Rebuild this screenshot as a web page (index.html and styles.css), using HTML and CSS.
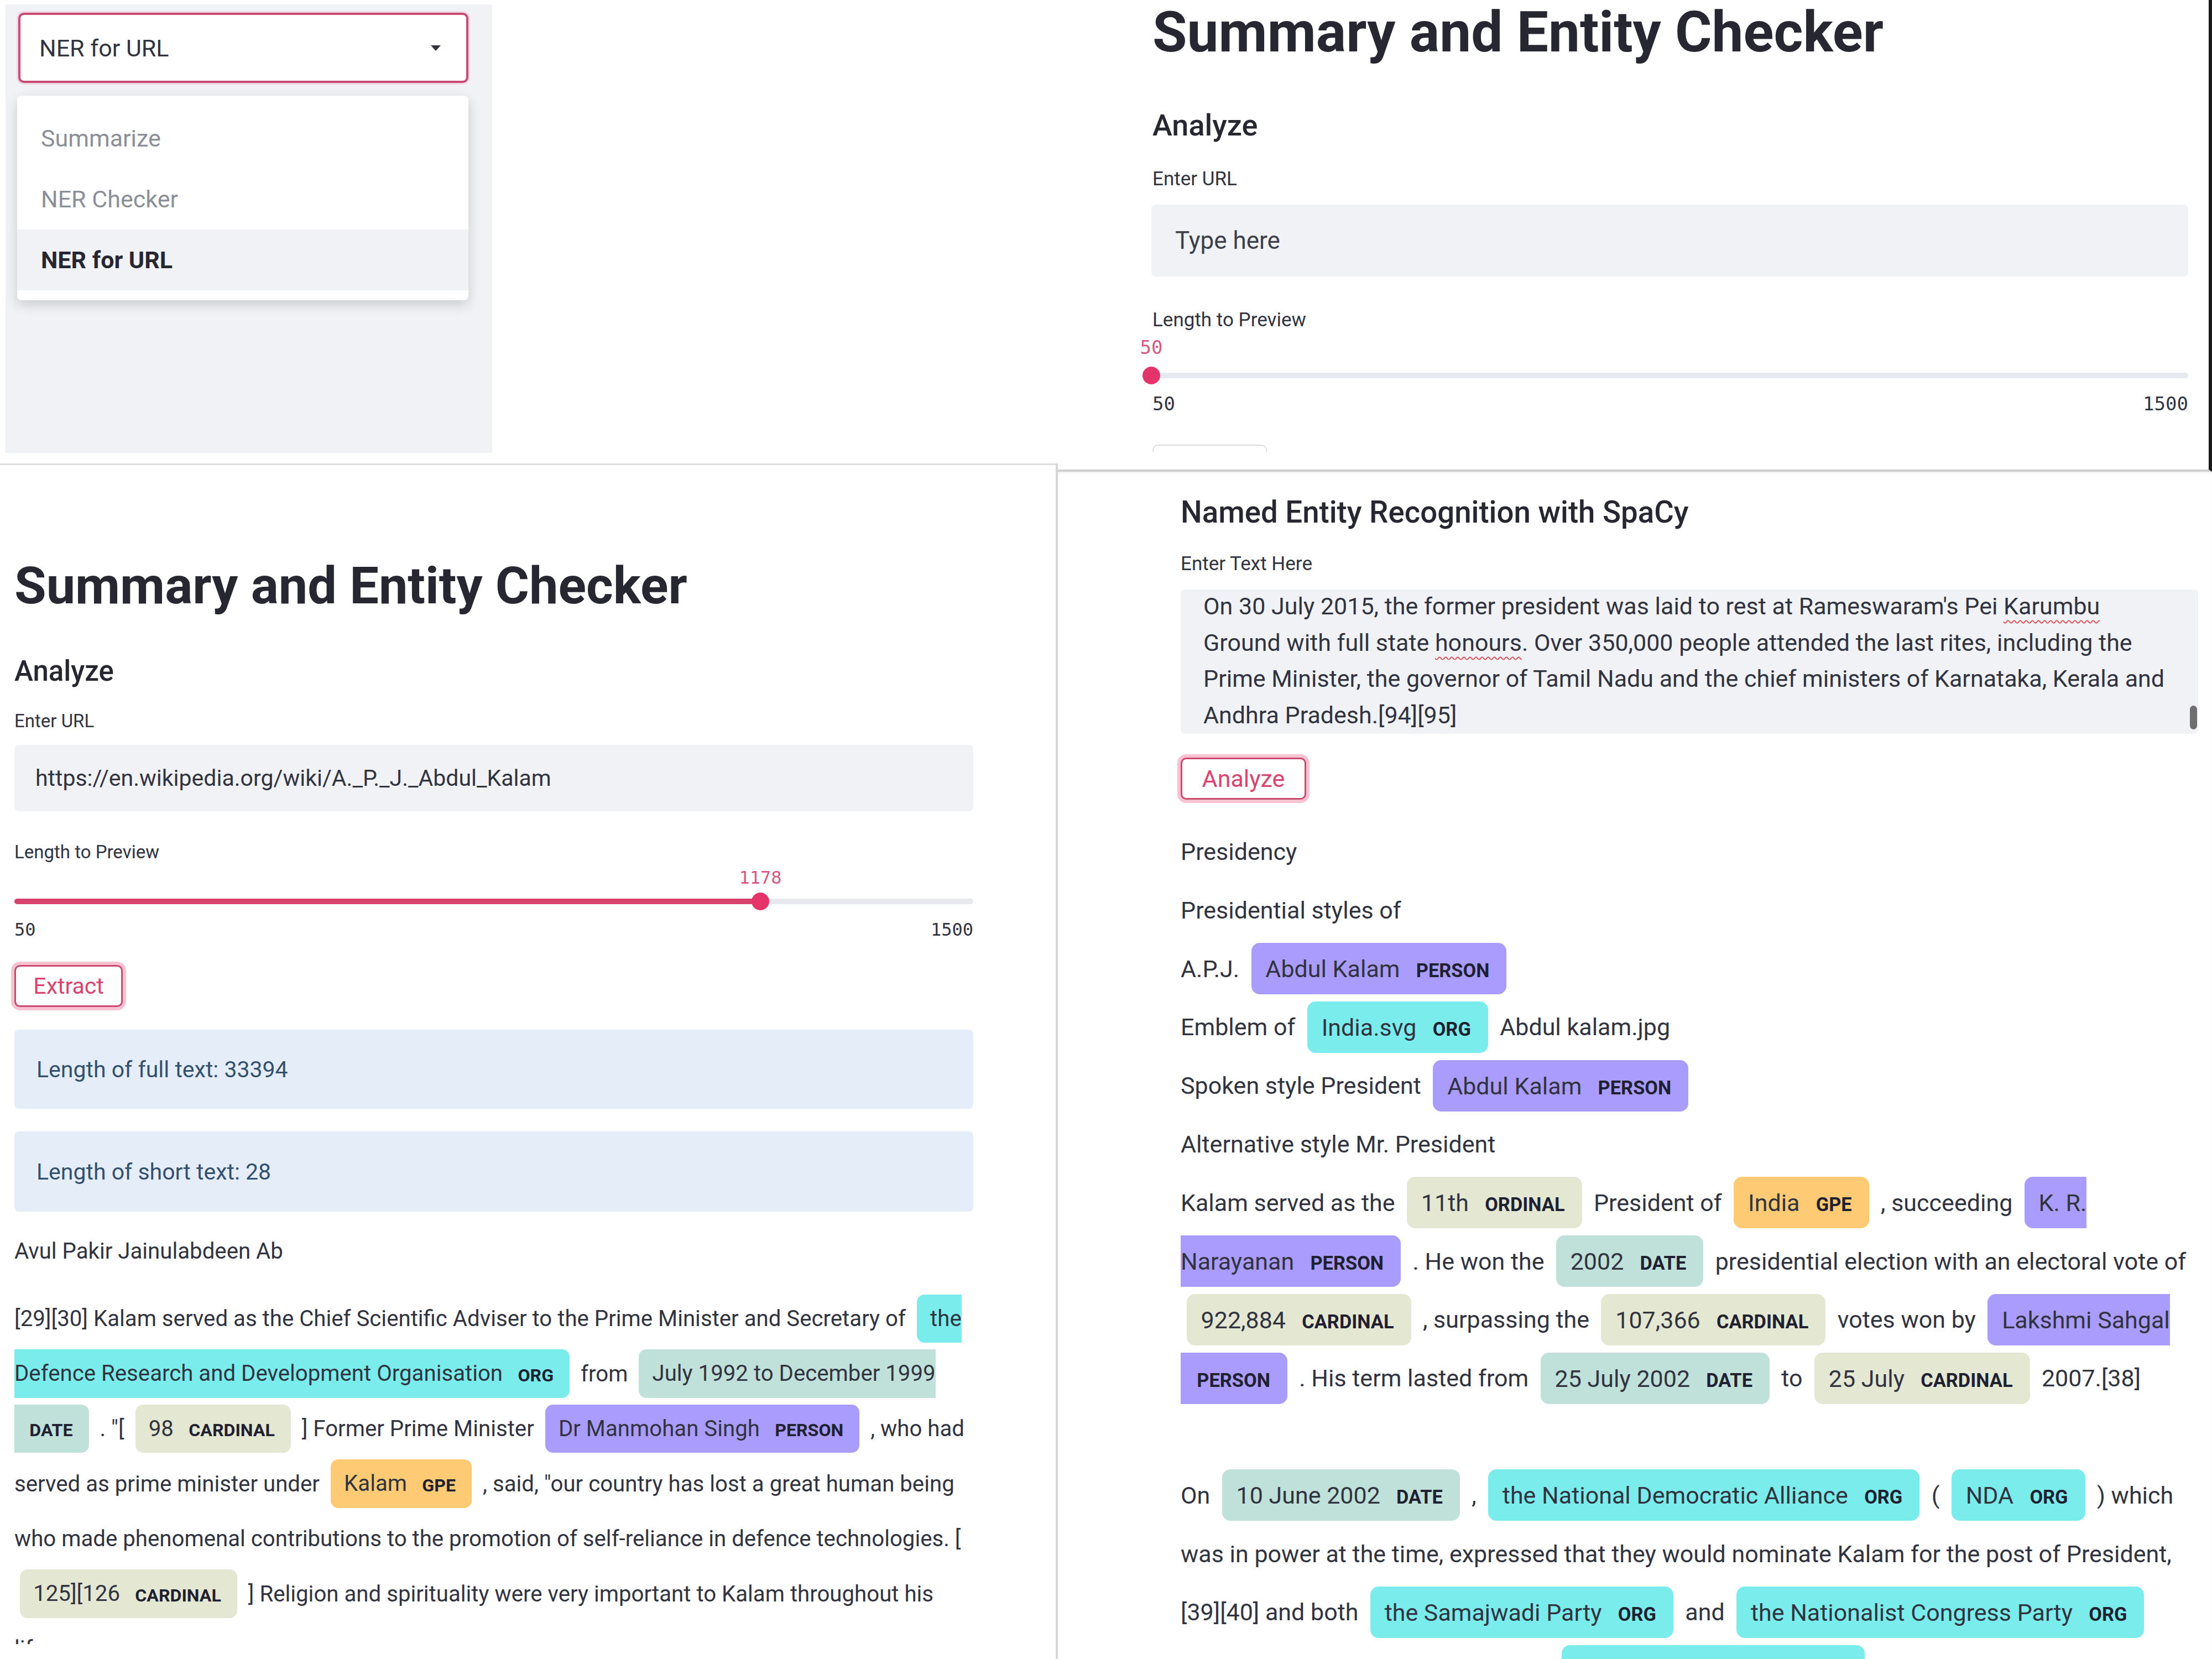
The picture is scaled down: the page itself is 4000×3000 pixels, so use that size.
FILE: index.html
```html
<!DOCTYPE html>
<html>
<head>
<meta charset="utf-8">
<title>Summary and Entity Checker</title>
<link rel="stylesheet" href="styles.css">
</head>
<body>
<div class="page">
  <div class="col-left">
    <div class="top-left">
      <div class="sidebar">
        <div class="select">
          <span>NER for URL</span>
          <svg class="caret" width="18" height="10" viewBox="0 0 18 10"><path d="M0 0H18L9 10Z"/></svg>
        </div>
        <div class="menu">
          <div class="menu-item">Summarize</div>
          <div class="menu-item">NER Checker</div>
          <div class="menu-item active">NER for URL</div>
        </div>
      </div>
    </div>

    <div class="panel-c">
      <div class="title title-c">Summary and Entity Checker</div>
      <div class="sub sub-c">Analyze</div>
      <div class="label label-c label-c-url">Enter URL</div>
      <div class="input input-c">https://en.wikipedia.org/wiki/A._P._J._Abdul_Kalam</div>
      <div class="label label-c label-c-len">Length to Preview</div>
      <div class="slider slider-c">
        <div class="val-row"><span class="val" style="left: 77.8%">1178</span></div>
        <div class="track-row"><div class="track"><div class="fill" style="width: 77.8%"></div><div class="thumb" style="left: 77.8%"></div></div></div>
        <div class="minmax"><span>50</span><span>1500</span></div>
      </div>
      <div class="btn btn-c">Extract</div>
      <div class="info info-1">Length of full text: 33394</div>
      <div class="info info-2">Length of short text: 28</div>
      <div class="plain-c">Avul Pakir Jainulabdeen Ab</div>
      <div class="ents ents-c">[29][30] Kalam served as the Chief Scientific Adviser to the Prime Minister and Secretary of <mark class="ent org">the<br>Defence Research and Development Organisation<span class="lbl">ORG</span></mark> from <mark class="ent date">July 1992 to December 1999<br><span class="lbl">DATE</span></mark> . "[ <mark class="ent card">98<span class="lbl">CARDINAL</span></mark> ] Former Prime Minister <mark class="ent per">Dr Manmohan Singh<span class="lbl">PERSON</span></mark> , who had<br>served as prime minister under <mark class="ent gpe">Kalam<span class="lbl">GPE</span></mark> , said, "our country has lost a great human being<br>who made phenomenal contributions to the promotion of self-reliance in defence technologies. [<br><mark class="ent card">125][126<span class="lbl">CARDINAL</span></mark> ] Religion and spirituality were very important to Kalam throughout his<br>life.</div>
    </div>
  </div>

  <div class="col-right">
    <div class="panel-b">
      <div class="clip">
        <div class="title title-b">Summary and Entity Checker</div>
        <div class="sub sub-b">Analyze</div>
        <div class="label label-b label-b-url">Enter URL</div>
        <div class="input input-b placeholder">Type here</div>
        <div class="label label-b label-b-len">Length to Preview</div>
        <div class="slider slider-b">
          <div class="val-row"><span class="val" style="left: 0%">50</span></div>
          <div class="track-row"><div class="track"><div class="fill" style="width: 0%"></div><div class="thumb" style="left: 0%"></div></div></div>
          <div class="minmax"><span>50</span><span>1500</span></div>
        </div>
        <div class="btn-ghost"></div>
      </div>
    </div>

    <div class="panel-d">
      <div class="sub sub-d">Named Entity Recognition with SpaCy</div>
      <div class="label label-d">Enter Text Here</div>
      <div class="textarea">
        <div class="ta-text">On 30 July 2015, the former president was laid to rest at Rameswaram's Pei <span class="spell">Karumbu</span><br>Ground with full state <span class="spell">honours</span>. Over 350,000 people attended the last rites, including the<br>Prime Minister, the governor of Tamil Nadu and the chief ministers of Karnataka, Kerala and<br>Andhra Pradesh.[94][95]</div>
        <div class="scroll-thumb"></div>
      </div>
      <div class="btn btn-d">Analyze</div>
      <div class="ents ents-d">Presidency<br>Presidential styles of<br>A.P.J. <mark class="ent per">Abdul Kalam<span class="lbl">PERSON</span></mark><br>Emblem of <mark class="ent org">India.svg<span class="lbl">ORG</span></mark> Abdul kalam.jpg<br>Spoken style President <mark class="ent per">Abdul Kalam<span class="lbl">PERSON</span></mark><br>Alternative style Mr. President<br>Kalam served as the <mark class="ent card">11th<span class="lbl">ORDINAL</span></mark> President of <mark class="ent gpe">India<span class="lbl">GPE</span></mark> , succeeding <mark class="ent per">K. R.<br>Narayanan<span class="lbl">PERSON</span></mark> . He won the <mark class="ent date">2002<span class="lbl">DATE</span></mark> presidential election with an electoral vote of<br><mark class="ent card">922,884<span class="lbl">CARDINAL</span></mark> , surpassing the <mark class="ent card">107,366<span class="lbl">CARDINAL</span></mark> votes won by <mark class="ent per">Lakshmi Sahgal<br><span class="lbl">PERSON</span></mark> . His term lasted from <mark class="ent date">25 July 2002<span class="lbl">DATE</span></mark> to <mark class="ent card">25 July<span class="lbl">CARDINAL</span></mark> 2007.[38]<br><br>On <mark class="ent date">10 June 2002<span class="lbl">DATE</span></mark> , <mark class="ent org">the National Democratic Alliance<span class="lbl">ORG</span></mark> ( <mark class="ent org">NDA<span class="lbl">ORG</span></mark> ) which<br>was in power at the time, expressed that they would nominate Kalam for the post of President,<br>[39][40] and both <mark class="ent org">the Samajwadi Party<span class="lbl">ORG</span></mark> and <mark class="ent org">the Nationalist Congress Party<span class="lbl">ORG</span></mark><br>backed his candidacy.[41][42] After <mark class="ent org">the Samajwadi Party<span class="lbl">ORG</span></mark> announced its support</div>
    </div>
  </div>
</div>
</body>
</html>
```

FILE: styles.css
```css
* { box-sizing: border-box; }
html, body { margin: 0; padding: 0; }
body {
  width: 4000px;
  height: 3000px;
  overflow: hidden;
  background: #ffffff;
  font-family: Roboto, "Liberation Sans", sans-serif;
  color: #31333f;
}
.page { display: flex; width: 4000px; height: 3000px; }
.col-left { width: 1913px; display: flex; flex-direction: column; }
.col-right { width: 2087px; display: flex; flex-direction: column; }

/* ---------- top-left: sidebar with dropdown ---------- */
.top-left { height: 838px; padding: 8px 0 0 10px; }
.sidebar {
  width: 880px; height: 811px;
  background: #f0f2f6;
  padding: 15px 0 0 23px;
}
.select {
  width: 814px; height: 127px;
  border: 4px solid #cc4b74;
  border-radius: 10px;
  background: #fff;
  box-shadow: 0 0 0 3px rgba(230, 120, 150, 0.18);
  display: flex; align-items: center; justify-content: space-between;
  padding: 0 46px 0 34px;
  font-size: 43px; color: #31333f;
}
.caret { fill: #31333f; }
.menu {
  margin: 23px 0 0 -2px;
  width: 816px; height: 370px;
  background: #fff;
  border-radius: 8px;
  box-shadow: 0 8px 22px rgba(0, 0, 0, 0.16);
  padding-top: 22px;
}
.menu-item {
  height: 110px; line-height: 110px;
  padding-left: 43px;
  font-size: 43px; color: #8d8f97;
}
.menu-item.active { background: #f0f2f6; color: #262730; font-weight: 700; }

/* ---------- shared ---------- */
.title { font-weight: 700; color: #262730; white-space: nowrap; }
.sub { font-weight: 500; color: #262730; white-space: nowrap; }
.label { color: #31333f; white-space: nowrap; }
.input {
  background: #f0f2f6; border-radius: 8px;
  display: flex; align-items: center;
  color: #31333f; white-space: nowrap;
}
.slider { font-family: "DejaVu Sans Mono", "Liberation Mono", monospace; }
.val-row { position: relative; }
.val { position: absolute; top: 0; transform: translateX(-50%); color: #d6577f; }
.track-row { display: flex; align-items: center; }
.track { position: relative; width: 100%; height: 10px; background: #e8e9ee; border-radius: 5px; }
.fill { height: 100%; background: #d8416d; border-radius: 5px; }
.thumb {
  position: absolute; top: 50%;
  width: 32px; height: 32px; border-radius: 50%;
  background: #e5346a;
  transform: translate(-50%, -50%);
}
.minmax { display: flex; justify-content: space-between; color: #31333f; }
.btn {
  display: flex; align-items: center; justify-content: center;
  background: #fff;
  border: 3px solid #c94a6e;
  border-radius: 10px;
  box-shadow: 0 0 0 6px rgba(240, 120, 155, 0.45);
  color: #d8436f;
}
.info {
  background: #e5eef8; border-radius: 8px;
  display: flex; align-items: center;
  padding-left: 40px;
  color: #33506e; font-size: 41px;
}

/* ---------- panel C: bottom-left ---------- */
.panel-c {
  flex: 1;
  border-top: 3px solid #dcdcdc;
  border-right: 4px solid #d6d6d6;
  padding-left: 26px;
  overflow: hidden;
  font-size: 40.2px;
}
.title-c { font-size: 93.6px; height: 112px; line-height: 112px; margin-top: 162px; }
.sub-c { font-size: 51px; height: 80px; line-height: 80px; margin-top: 59px; }
.label-c { font-size: 33px; height: 44px; line-height: 44px; }
.label-c-url { margin-top: 28px; }
.input-c { width: 1734px; height: 120px; margin-top: 21px; padding-left: 38px; font-size: 41px; }
.label-c-len { margin-top: 52px; }
.slider-c { width: 1734px; font-size: 32px; }
.slider-c .val-row { height: 36px; line-height: 36px; margin-top: 6px; }
.slider-c .track-row { height: 36px; margin-top: 7px; }
.slider-c .minmax { height: 36px; line-height: 36px; margin-top: 15px; }
.btn-c { width: 196px; height: 76px; margin-top: 46px; font-size: 41px; }
.info-1 { width: 1734px; height: 143px; margin-top: 41px; }
.info-2 { width: 1734px; height: 145px; margin-top: 41px; }
.plain-c { height: 60px; line-height: 60px; margin-top: 42px; white-space: nowrap; }
.ents { white-space: nowrap; color: #31333f; }
.ents-c { margin-top: 42px; line-height: 99.5px; height: 638px; overflow: hidden; }

/* ---------- entity marks (displaCy) ---------- */
.ent {
  padding: 0.5em 0.72em 0.5em 0.6em;
  margin: 0 0.25em;
  line-height: 1;
  border-radius: 0.35em;
  color: #31333f;
}
.lbl {
  font-size: 0.8em;
  font-weight: 700;
  line-height: 1;
  vertical-align: middle;
  margin-left: 0.85em;
  color: #1f2030;
}
.org { background: #7aecec; }
.per { background: #aa9cfc; }
.gpe { background: #feca74; }
.date { background: #bfe1d9; }
.card { background: #e4e7d2; }

/* ---------- panel B: top-right ---------- */
.panel-b {
  height: 853px;
  border-right: 6px solid #1a1a1a;
  border-bottom: 4px solid #cfcfcf;
  padding: 0 31px 0 169px;
}
.panel-b .clip { height: 817px; overflow: hidden; margin-left: -40px; padding-left: 40px; }
.title-b { font-size: 101.7px; height: 118px; line-height: 118px; padding-left: 2px; }
.sub-b { font-size: 54px; height: 80px; line-height: 80px; margin-top: 69px; padding-left: 2px; }
.label-b { font-size: 35px; height: 48px; line-height: 48px; padding-left: 2px; }
.label-b-url { margin-top: 33px; }
.input-b { width: 1875px; height: 130px; margin-top: 22px; padding-left: 43px; font-size: 44px; }
.placeholder { color: #3d3f4a; }
.label-b-len { margin-top: 55px; }
.slider-b { width: 1875px; font-size: 34px; }
.slider-b .val-row { height: 40px; line-height: 40px; margin-top: 5px; }
.slider-b .track-row { height: 40px; margin-top: 11px; }
.slider-b .minmax { height: 40px; line-height: 40px; margin-top: 11px; padding-left: 2px; }
.btn-ghost {
  width: 207px; height: 76px; margin: 54px 0 0 2px;
  border: 2px solid #dcdde2; border-radius: 10px;
}

/* ---------- panel D: bottom-right ---------- */
.panel-d {
  flex: 1;
  padding: 0 25px 0 222px;
  overflow: hidden;
  font-size: 43px;
  box-shadow: inset 0 4px 4px -2px rgba(0, 0, 0, 0.08);
}
.sub-d { font-size: 54.6px; height: 70px; line-height: 70px; margin-top: 38px; }
.label-d { font-size: 35px; height: 44px; line-height: 44px; margin-top: 37px; }
.textarea {
  position: relative;
  width: 1840px; height: 261px; margin-top: 24px;
  background: #f0f2f6; border-radius: 8px;
  padding-left: 41px;
  overflow: hidden;
}
.ta-text { white-space: nowrap; font-size: 43px; line-height: 65.5px; margin-top: -2px; color: #31333f; }
.spell {
  text-decoration: underline wavy #de4f55;
  text-decoration-thickness: 2px;
  text-underline-offset: 10px;
}
.scroll-thumb {
  position: absolute; right: 2px; top: 210px;
  width: 13px; height: 43px; border-radius: 7px;
  background: #6f6f6f;
}
.btn-d { width: 227px; height: 76px; margin-top: 43px; font-size: 43px; }
.ents-d { margin-top: 42px; line-height: 105.8px; }
```
